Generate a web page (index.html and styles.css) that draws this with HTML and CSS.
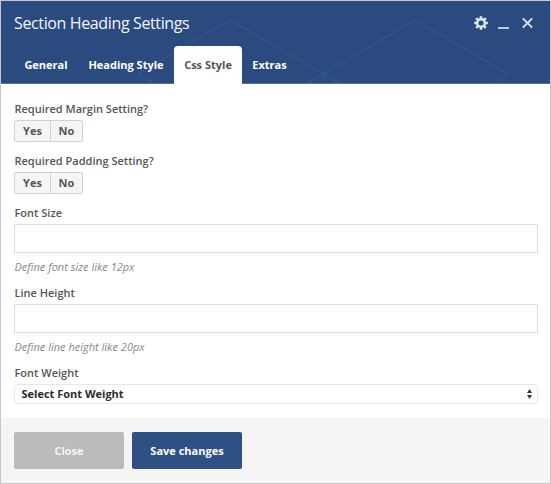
FILE: index.html
```
<!DOCTYPE html>
<html lang="en">
<head>
<meta charset="utf-8">
<title>Section Heading Settings</title>
<link rel="stylesheet" href="styles.css">
</head>
<body>
<div class="panel">
  <header class="header">
    <svg class="pattern" width="549" height="82" viewBox="1 1 549 82" fill="none" stroke="#305389" stroke-width="2" aria-hidden="true">
      <path d="M138 84V74L230 20L323 74V84M138 74L155 84M323 74L306 84M323 74L415 20L508 74L492 84M323 74L340 84"/>
    </svg>
    <div class="titlebar">
      <h1 class="title">Section Heading Settings</h1>
      <div class="controls">
        <svg class="gear" width="14" height="14" viewBox="0 0 14 14" aria-label="Settings">
          <g stroke="#dfe6f1" stroke-width="2.6"><path d="M7 .2V13.8M.2 7H13.8M2.2 2.2L11.8 11.8M11.8 2.2L2.2 11.8"/></g>
          <circle cx="7" cy="7" r="5.1" fill="#dfe6f1"/><circle cx="7" cy="7" r="2.6" fill="#2b4b80"/>
        </svg>
        <svg class="minimize" width="11" height="14" viewBox="0 0 11 14" aria-label="Minimize"><path d="M0 12H11" stroke="#b9cad8" stroke-width="2"/></svg>
        <svg width="11" height="14" viewBox="0 0 11 14" aria-label="Close"><path d="M.8 2.3L10.2 11.7M10.2 2.3L.8 11.7" stroke="#dfe6f1" stroke-width="1.8"/></svg>
      </div>
    </div>
    <nav class="tabs">
      <a class="tab general">General</a>
      <a class="tab heading">Heading Style</a>
      <a class="tab active">Css Style</a>
      <a class="tab extras">Extras</a>
    </nav>
  </header>
  <main class="body">
    <div class="field choice">
      <div class="label">Required Margin Setting?</div>
      <div class="toggle"><button>Yes</button><button>No</button></div>
    </div>
    <div class="field choice">
      <div class="label">Required Padding Setting?</div>
      <div class="toggle"><button>Yes</button><button>No</button></div>
    </div>
    <div class="field">
      <label class="label" for="size">Font Size</label>
      <input class="input" id="size" type="text">
      <div class="hint">Define font size like 12px</div>
    </div>
    <div class="field">
      <label class="label" for="line">Line Height</label>
      <input class="input" id="line" type="text">
      <div class="hint">Define line height like 20px</div>
    </div>
    <div class="field">
      <div class="label">Font Weight</div>
      <div class="select"><span>Select Font Weight</span>
        <svg width="5" height="10" viewBox="0 0 5 10" fill="#30343b" aria-hidden="true"><path d="M2.5 0L5 4H0ZM0 6H5L2.5 10Z"/></svg>
      </div>
    </div>
  </main>
  <footer class="footer">
    <button class="btn close">Close</button>
    <button class="btn save">Save changes</button>
  </footer>
</div>
</body>
</html>
```
FILE: styles.css
```
* { box-sizing: border-box; }
body { margin: 0; font-family: "Open Sans", sans-serif; font-size: 11px; color: #555; }
button { font-family: inherit; padding: 0; margin: 0; }
.panel { width: 551px; height: 484px; border: 1px solid #c8c8c8; background: #fff; display: flex; flex-direction: column; }
.header { position: relative; height: 83px; background: #2b4b80; border-bottom: 1px solid #5270a0; color: #fff; }
.pattern { position: absolute; left: 0; top: 0; }
.titlebar { position: relative; height: 45px; display: flex; justify-content: space-between; padding: 0 17px 0 13px; }
.title { margin: 0; font-size: 16px; font-weight: 400; line-height: 44px; letter-spacing: -0.37px; color: #f3f5f9; }
.controls { display: flex; padding-top: 15px; }
.gear { margin-right: 10px; }
.minimize { margin-right: 13px; }
.tabs { position: relative; display: flex; height: 38px; padding-left: 14px; }
.tab { font-size: 11px; font-weight: 700; line-height: 37px; text-align: center; white-space: nowrap; }
.general { width: 62px; }
.heading { width: 98px; }
.active { width: 68px; background: #fff; color: #555; border-radius: 4px 4px 0 0; height: 39px; }
.extras { width: 55px; }
.heading { margin-right: -1px; }
.body { height: 334px; padding: 16px 12px 0 13px; }
.field { height: 80px; }
.choice { height: 52px; }
.label { display: block; height: 20px; padding-left: .5px; line-height: 17px; font-weight: 600; }
.toggle { display: flex; width: 69px; height: 22px; border: 1px solid #d2d2d2; border-radius: 2px; background: #f5f5f5; }
.toggle button { flex: 1 1 auto; width: 36px; border: 0; background: none; color: #555; font-size: 11px; font-weight: 700; line-height: 20px; }
.toggle button + button { width: 33px; border-left: 1px solid #d2d2d2; }
.input { display: block; width: 100%; height: 29px; border: 1px solid #dedede; background: #fff; padding: 0 6px; font: inherit; }
.hint { height: 26px; padding-left: .5px; line-height: 27px; color: #888; font-style: italic; }
.select { display: flex; align-items: center; justify-content: space-between; height: 20px; border: 1px solid #e6e6e6; border-radius: 4px; padding: 0 5px 0 6.5px; color: #2d2d2d; font-weight: 700; line-height: 18px; }
.footer { height: 65px; background: #f5f5f5; display: flex; gap: 8px; padding: 14px 13px; }
.btn { width: 110px; height: 37px; border: 0; border-radius: 2px; color: #fff; font-size: 11px; font-weight: 700; }
.close { background: #bbb; color: #f5f5f5; }
.save { background: #2f5085; }
```
